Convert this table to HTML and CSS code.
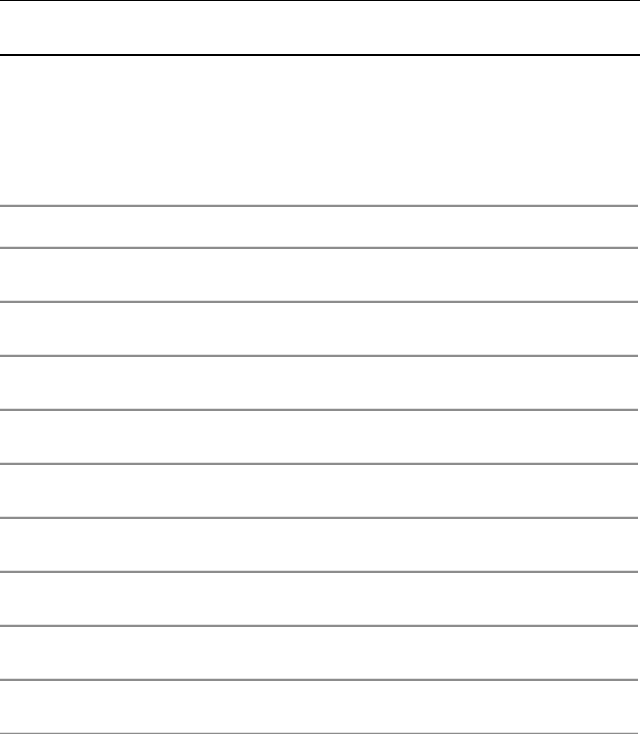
FILE: index.html
```html
<!DOCTYPE html>
<html>
<head>
<meta charset="utf-8">
<link rel="stylesheet" href="styles.css">
</head>
<body>
<div class="page">
  <div class="head"></div>
  <div class="rows">
    <div class="row tall"></div>
    <div class="row short"></div>
    <div class="row"></div>
    <div class="row"></div>
    <div class="row"></div>
    <div class="row"></div>
    <div class="row"></div>
    <div class="row"></div>
    <div class="row"></div>
    <div class="row"></div>
    <div class="row"></div>
  </div>
</div>
</body>
</html>
```
FILE: styles.css
```css
html, body {
  margin: 0;
  padding: 0;
  background: #fff;
  font-family: "Liberation Sans", Arial, sans-serif;
}
.page {
  display: flex;
  flex-direction: column;
  width: 640px;
}
.head {
  height: 53px;
  border-top: 1px solid #000;
  border-bottom: 2px solid #000;
}
.rows {
  display: flex;
  flex-direction: column;
  width: 638px;
}
.row {
  height: 52px;
  border-bottom: 2px solid #8c8c8c;
  box-shadow: inset 0 -1px 0 #e2e2e2;
}
.row.tall {
  height: 149px;
}
.row.short {
  height: 40px;
}
```
